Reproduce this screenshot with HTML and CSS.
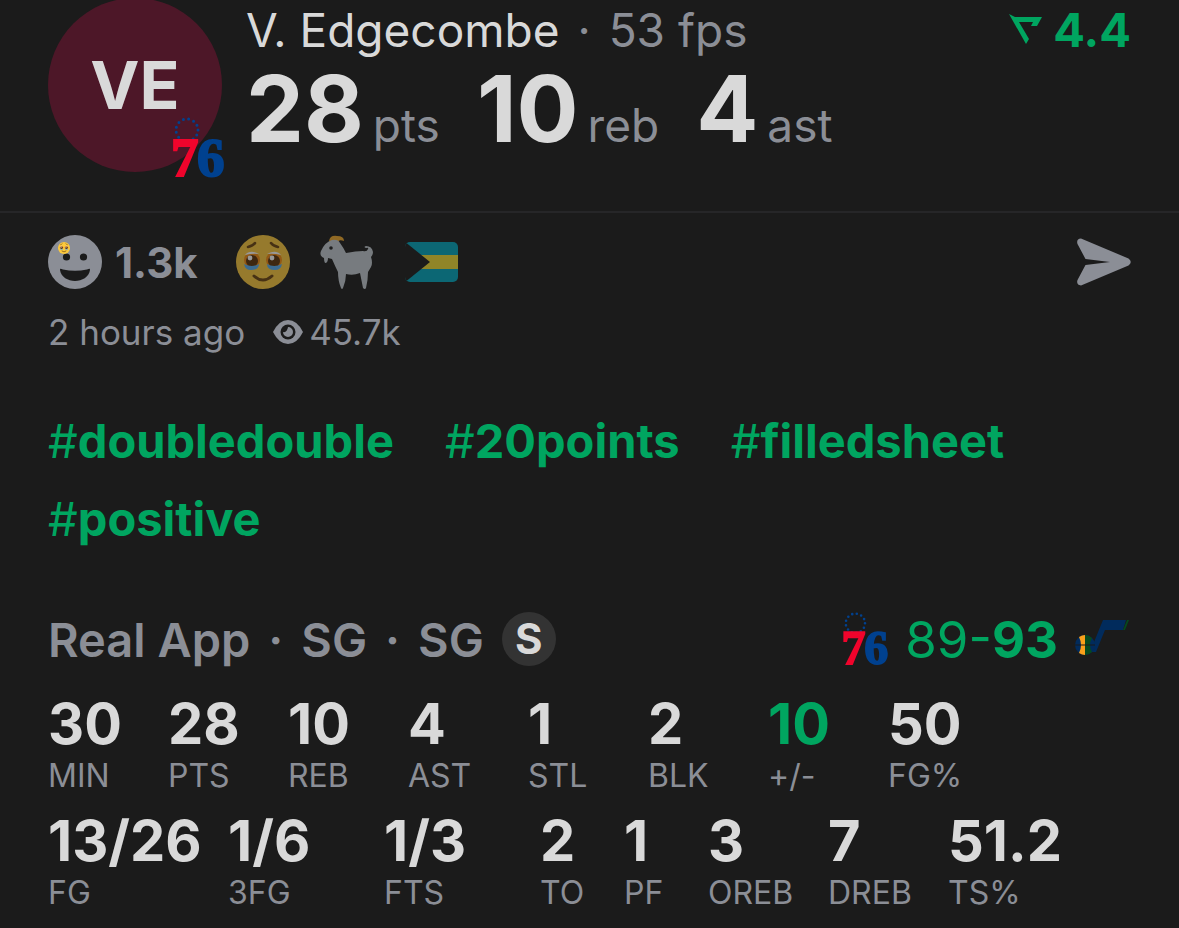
FILE: index.html
```html
<!DOCTYPE html>
<html lang="en">
<head>
    <meta charset="UTF-8">
    <meta name="viewport" content="width=device-width, initial-scale=1.0">
    <title>V. Edgecombe</title>
    <link rel="stylesheet" href="styles.css">
</head>
<body>
    <!-- Shared shapes -->
    <svg class="defs" aria-hidden="true">
        <symbol id="tearyFace" viewBox="0 0 54 54">
            <circle cx="27" cy="27" r="27" fill="#fcc93c"/>
            <path d="M12 12q5-1 7-4M42 12q-5-1-7-4" fill="none" stroke="#6b4410" stroke-width="2.6" stroke-linecap="round"/>
            <ellipse cx="16" cy="25" rx="8" ry="8" fill="#f28a12"/>
            <ellipse cx="38" cy="25" rx="8" ry="8" fill="#f28a12"/>
            <path d="M9 20q5-6 14-1q-6-1-14 1zM45 20q-5-6-14-1q6-1 14 1z" fill="#fff"/>
            <circle cx="16" cy="26" r="6" fill="#5c3208"/>
            <circle cx="38" cy="26" r="6" fill="#5c3208"/>
            <circle cx="14" cy="23" r="2.4" fill="#fff"/>
            <circle cx="36" cy="23" r="2.4" fill="#fff"/>
            <path d="M8 29q8 4 15 0q0 6-8 6q-6 0-7-6zM46 29q-8 4-15 0q0 6 8 6q6 0 7-6z" fill="#58aef0"/>
            <path d="M18 41q9 8 18 0" fill="none" stroke="#6b4410" stroke-width="3" stroke-linecap="round"/>
        </symbol>
    </svg>

    <header class="player">
        <div class="avatar">
            <span>VE</span>
            <svg class="avatar-team" viewBox="0 0 54 64" role="img" aria-label="Philadelphia">
                <circle cx="16" cy="14" r="11" fill="none" stroke="#00418f" stroke-width="3" stroke-linecap="round" stroke-dasharray="0 5.317"/>
                <text class="logo-digit seven" x="0" y="60">7</text>
                <text class="logo-digit six" x="26" y="60">6</text>
            </svg>
        </div>
        <div class="summary">
            <h1 class="name">V. Edgecombe <span class="dot">·</span> <span class="fps">53 fps</span></h1>
            <div class="totals">
                <p><strong>28</strong><span>pts</span></p>
                <p><strong>10</strong><span>reb</span></p>
                <p><strong>4</strong><span>ast</span></p>
            </div>
        </div>
        <div class="rating">
            <svg width="34" height="32" viewBox="0 0 34 32" aria-hidden="true">
                <path d="M0 0L6 3H33L28 12H22L24 8H10L20 25L17 30Z" fill="#00a560"/>
            </svg>
            <span>4.4</span>
        </div>
    </header>

    <main class="content">
        <div class="reactions">
            <button type="button" class="react-count">
                <svg width="54" height="54" viewBox="0 0 54 54" aria-hidden="true">
                    <circle cx="27" cy="27" r="27" fill="#8b8e96"/>
                    <circle cx="18.5" cy="22" r="3.6" fill="#1b1b1b"/>
                    <circle cx="35.5" cy="22" r="3.6" fill="#1b1b1b"/>
                    <path d="M12 35C12 33 13 34 15 34.500Q27 37 39 34.500C41 34 42 33 42 35C41 42 34 46 27 46S13 42 12 35Z" fill="#1b1b1b"/>
                    <use href="#tearyFace" x="10" y="7" width="12" height="12"/>
                </svg>
                <span>1.3k</span>
            </button>
            <button type="button" class="emoji" aria-label="Holding back tears">
                <svg width="54" height="54"><use href="#tearyFace"/></svg>
            </button>
            <button type="button" class="emoji" aria-label="Goat">
                <svg width="54" height="54" viewBox="0 0 54 54">
                    <path d="M9 6Q10 0 17 1Q24 1 24 6Q18 4 18 8L12 8Z" fill="#f0a92c"/>
                    <path d="M12 5Q18 4 20 8Q23 12 26 18Q36 16 43 16Q47 17 48 14Q49 12 46 13Q43 12 46 11Q52 11 53 17Q53 20 51 22Q53 28 51 32L48 37Q48 45 46 53Q45 55 43 53L40 38Q33 41 26 39Q26 46 23 53Q22 55 21 53Q18 46 18 37Q15 31 12 24L8 23Q8 28 5 28Q4 27 4 23Q-1 21 1 16Q5 7 12 5Z" fill="#c3cbd1"/>
                    <circle cx="11" cy="13" r="1.800" fill="#222"/>
                </svg>
            </button>
            <button type="button" class="emoji" aria-label="Bahamas">
                <svg width="54" height="54" viewBox="0 0 54 54">
                    <clipPath id="flagClip"><rect x="1" y="7" width="53" height="40" rx="5"/></clipPath>
                    <g clip-path="url(#flagClip)">
                        <path d="M0 7h54v40H0z" fill="#00a5bd"/>
                        <path d="M0 20h54v14H0z" fill="#f0dc34"/>
                        <path d="M0 6L26 27L0 48z" fill="#1b1b1b"/>
                    </g>
                </svg>
            </button>
            <button type="button" class="send" aria-label="Send">
                <svg width="54" height="48" viewBox="0 0 54 48">
                    <path d="M4 0.500L51.500 20.500Q56 24 51.500 27.500L4 47.500Q-1 47 0.500 42L8.500 27L33 24L8.500 21L0.500 6Q-1 1 4 0.500Z" fill="#8b8e96"/>
                </svg>
            </button>
        </div>

        <div class="meta">
            <span>2 hours ago</span>
            <span class="views">
                <svg width="30" height="24" viewBox="0 0 30 24" aria-hidden="true">
                    <path d="M0 12Q6 0 15 0T30 12Q24 24 15 24T0 12Z" fill="#8b8e96"/>
                    <circle cx="15" cy="12" r="7.500" fill="#1b1b1b"/>
                    <path d="M15 7A5 5 0 1 1 10 12Q14 13 15 7Z" fill="#8b8e96"/>
                </svg>
                45.7k
            </span>
        </div>

        <nav class="tags">
            <a href="#doubledouble"><span>#</span>doubledouble</a>
            <a href="#20points"><span>#</span>20points</a>
            <a href="#filledsheet"><span>#</span>filledsheet</a>
            <a href="#positive"><span>#</span>positive</a>
        </nav>

        <div class="game">
            <h2 class="source">
                <span>Real App</span>
                <span>·</span>
                <span>SG</span>
                <span>·</span>
                <span>SG</span>
                <span class="starter">S</span>
            </h2>
            <div class="score">
                <svg class="score-team" viewBox="0 0 54 64" role="img" aria-label="Philadelphia">
                    <circle cx="16" cy="14" r="11" fill="none" stroke="#00418f" stroke-width="3" stroke-linecap="round" stroke-dasharray="0 5.317"/>
                    <text class="logo-digit seven" x="0" y="60">7</text>
                    <text class="logo-digit six" x="26" y="60">6</text>
                </svg>
                <span>89-<b>93</b></span>
                <svg width="56" height="40" viewBox="0 0 56 40" role="img" aria-label="Utah">
                    <path d="M29 1H52L49 11H31L22 33H17L20 23Z" fill="#012b5c"/>
                    <path d="M53 1H55L51 11H49Z" fill="#06491f"/>
                    <circle cx="11" cy="26" r="10" fill="#012b5c"/>
                    <path d="M5 18Q8 16 11 16V36Q8 36 5 34Q9 26 5 18Z" fill="#f9a01b"/>
                    <path d="M11 16Q15 16 18 19Q14 26 18 33Q15 36 11 36Z" fill="#06491f"/>
                    <path d="M1 26H21" stroke="#1b1b1b" stroke-width="1"/>
                </svg>
            </div>
        </div>

        <dl class="stats">
            <div><dt>MIN</dt><dd>30</dd></div>
            <div><dt>PTS</dt><dd>28</dd></div>
            <div><dt>REB</dt><dd>10</dd></div>
            <div><dt>AST</dt><dd>4</dd></div>
            <div><dt>STL</dt><dd>1</dd></div>
            <div><dt>BLK</dt><dd>2</dd></div>
            <div><dt>+/-</dt><dd class="plus">10</dd></div>
            <div><dt>FG%</dt><dd>50</dd></div>
        </dl>
        <dl class="stats shooting">
            <div><dt>FG</dt><dd>13/26</dd></div>
            <div><dt>3FG</dt><dd>1/6</dd></div>
            <div><dt>FTS</dt><dd>1/3</dd></div>
            <div><dt>TO</dt><dd>2</dd></div>
            <div><dt>PF</dt><dd>1</dd></div>
            <div><dt>OREB</dt><dd>3</dd></div>
            <div><dt>DREB</dt><dd>7</dd></div>
            <div><dt>TS%</dt><dd>51.2</dd></div>
        </dl>
    </main>
</body>
</html>
```
FILE: styles.css
```css
* {
    box-sizing: border-box;
}

body {
    margin: 0;
    background-color: #1b1b1b;
    color: #8b8e96;
    font-family: Inter, "Liberation Sans", sans-serif;
    overflow-x: hidden;
}

h1, h2, p, dl, dd {
    margin: 0;
}

button {
    display: flex;
    align-items: center;
    padding: 0;
    border: none;
    background: none;
    color: inherit;
    font: inherit;
    cursor: pointer;
}

svg {
    display: block;
    flex: none;
    overflow: visible;
}

.defs {
    position: absolute;
    width: 0;
    height: 0;
}

.logo-digit {
    font-family: "Liberation Serif", serif;
    font-size: 55px;
    font-weight: bold;
    stroke-width: 2px;
}

.seven {
    fill: #f0042c;
    stroke: #f0042c;
}

.six {
    fill: #00418f;
    stroke: #00418f;
}

/* Player header */
.player {
    display: flex;
    align-items: flex-start;
    margin-top: -2px;
    padding: 0 48px 39px;
    border-bottom: 2px solid #262628;
}

.avatar {
    position: relative;
    display: flex;
    flex: none;
    align-items: center;
    justify-content: center;
    width: 174px;
    height: 174px;
    margin-right: 24px;
    border-radius: 50%;
    background-color: #4d1728;
    color: #d9d9d9;
    font-size: 66px;
    font-weight: 700;
}

.avatar-team {
    position: absolute;
    right: -3px;
    bottom: -8px;
    width: 54px;
    height: 64px;
}

.summary {
    flex: 1;
}

.name {
    color: #d9d9d9;
    font-size: 46px;
    font-weight: 400;
    line-height: 64px;
}

.fps, .dot {
    color: #8b8e96;
}

.dot {
    margin: 0 5px;
}

.totals {
    display: flex;
    gap: 37px;
    line-height: 94px;
}

.totals p {
    display: flex;
    align-items: baseline;
    gap: 9px;
    font-size: 46px;
}

.totals strong {
    color: #d9d9d9;
    font-size: 92px;
    font-weight: 700;
}

.rating {
    display: flex;
    align-items: center;
    gap: 10px;
    color: #00a560;
    font-size: 47px;
    font-weight: 700;
    line-height: 64px;
}

/* Post details */
.content {
    padding: 20px 48px 12px;
}

.reactions {
    display: flex;
    align-items: center;
    gap: 30px;
    height: 58px;
}

.react-count {
    gap: 13px;
    margin-right: 8px;
    font-size: 42px;
    font-weight: 700;
}

.emoji {
    opacity: 0.55;
}

.send {
    margin-left: auto;
}

.meta {
    display: flex;
    gap: 28px;
    margin-top: 17px;
    font-size: 35px;
    line-height: 48px;
}

.views {
    display: flex;
    align-items: center;
    gap: 6px;
}

.tags {
    display: flex;
    flex-wrap: wrap;
    column-gap: 51px;
    margin-top: 46px;
    font-size: 47px;
    font-weight: 700;
    line-height: 78px;
}

.tags a {
    color: #00a560;
    text-decoration: none;
}

.tags span {
    font-weight: 400;
}

.game {
    display: flex;
    align-items: center;
    justify-content: space-between;
    height: 60px;
    margin-top: 51px;
}

.source {
    display: flex;
    align-items: center;
    gap: 18px;
    font-size: 47px;
    font-weight: 600;
}

.starter {
    width: 54px;
    height: 54px;
    border-radius: 50%;
    background-color: #333;
    color: #d9d9d9;
    font-size: 42px;
    font-weight: 700;
    line-height: 54px;
    text-align: center;
}

.score {
    display: flex;
    align-items: center;
    gap: 16px;
    padding-right: 1px;
    color: #00a560;
    font-size: 51px;
}

.score-team {
    width: 48px;
    height: 56px;
}

/* Box score */
.stats {
    display: grid;
    grid-template-columns: repeat(9, 1fr);
    margin-top: 22px;
    padding-right: 3px;
}

.stats div {
    display: flex;
    flex-direction: column-reverse;
}

.stats dt {
    font-size: 32px;
    line-height: 38px;
}

.stats dd {
    color: #d9d9d9;
    font-size: 56px;
    font-weight: 700;
    line-height: 66px;
}

.stats .plus {
    color: #00a560;
}

.shooting {
    grid-template-columns: 15fr 13fr 13fr 7fr 7fr 10fr 10fr 15fr;
    margin-top: 13px;
}
```
